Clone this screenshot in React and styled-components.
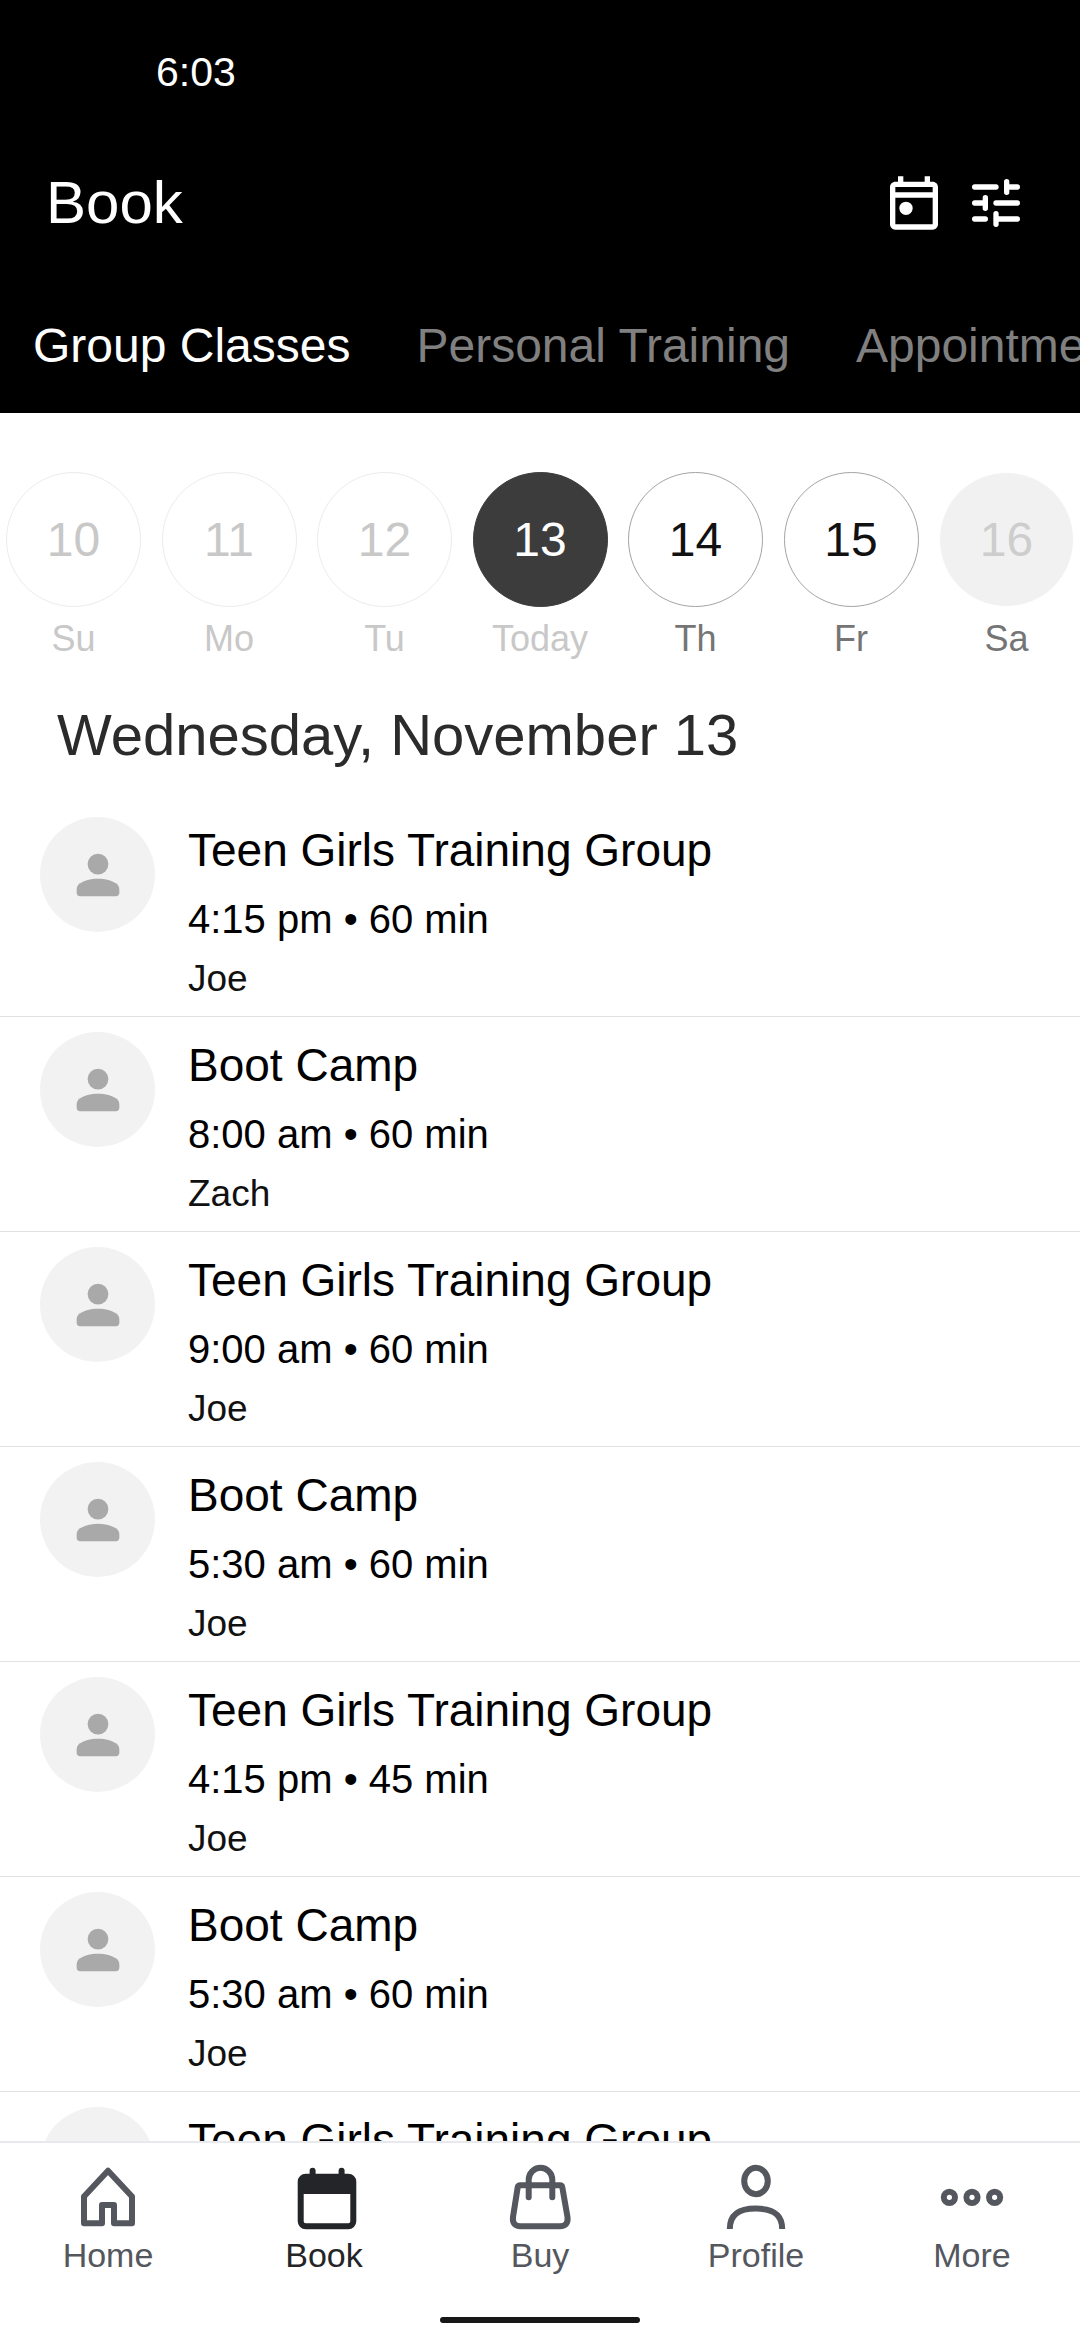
import React, { useState } from "react";
import styled, { createGlobalStyle } from "styled-components";

const tabs = ["Group Classes", "Personal Training", "Appointments"];

const days = [
  { date: 10, label: "Su", status: "past" },
  { date: 11, label: "Mo", status: "past" },
  { date: 12, label: "Tu", status: "past" },
  { date: 13, label: "Today", status: "selected" },
  { date: 14, label: "Th", status: "open" },
  { date: 15, label: "Fr", status: "open" },
  { date: 16, label: "Sa", status: "closed" },
];

const classes = [
  { id: 1, name: "Teen Girls Training Group", time: "4:15 pm • 60 min", coach: "Joe" },
  { id: 2, name: "Boot Camp", time: "8:00 am • 60 min", coach: "Zach" },
  { id: 3, name: "Teen Girls Training Group", time: "9:00 am • 60 min", coach: "Joe" },
  { id: 4, name: "Boot Camp", time: "5:30 am • 60 min", coach: "Joe" },
  { id: 5, name: "Teen Girls Training Group", time: "4:15 pm • 45 min", coach: "Joe" },
  { id: 6, name: "Boot Camp", time: "5:30 am • 60 min", coach: "Joe" },
  { id: 7, name: "Teen Girls Training Group", time: "4:15 pm • 60 min", coach: "Joe" },
];

const TodayIcon = () => (
  <Icon viewBox="0 -1 24 24" aria-hidden="true">
    <path
      fill="currentColor"
      fillRule="evenodd"
      d="M19 3h-1V1h-2v2H8V1H6v2H5c-1.1 0-2 .9-2 2v14c0 1.1.9 2 2 2h14c1.1 0 2-.9 2-2V5c0-1.1-.9-2-2-2zM19 19H5V9h14zM19 7H5V5h14z"
    />
    <circle cx="9" cy="13" r="2.5" fill="currentColor" />
  </Icon>
);

const FilterIcon = () => (
  <Icon viewBox="0 0 24 24" aria-hidden="true">
    <path
      fill="none"
      stroke="currentColor"
      strokeWidth="2"
      strokeLinecap="round"
      d="M4 6h8M16 4v4M16 6h4M4 12h4M8 10v4M12 12h8M4 18h4M12 16v4M12 18h8"
    />
  </Icon>
);

const PersonIcon = () => (
  <Icon viewBox="0 0 24 24" fill="currentColor" aria-hidden="true">
    <circle cx="12" cy="7.9" r="3.9" />
    <path d="M12 13.4c-2.9 0-5.3.8-6.7 1.7C4.4 15.7 4 16.5 4 17.4V18.7C4 19.5 4.5 20 5.3 20H18.7C19.5 20 20 19.5 20 18.7V17.4C20 16.5 19.6 15.7 18.7 15.1C17.3 14.2 14.9 13.4 12 13.4z" />
  </Icon>
);

const HomeIcon = () => (
  <NavIcon viewBox="0 0 64 64" aria-hidden="true">
    <path d="M8 31.5L32 5.8L56 31.5V58.3H38V40H26V58.3H8Z" />
  </NavIcon>
);

const BookIcon = () => (
  <NavIcon viewBox="0 0 64 64" aria-hidden="true">
    <path d="M20.6 5.8V12M49.6 5.8V12" />
    <rect x="8.7" y="11.7" width="52.6" height="49.6" rx="5" />
    <path d="M10 12H60V29H10Z" fill="currentColor" stroke="none" />
  </NavIcon>
);

const BagIcon = () => (
  <NavIcon viewBox="0 0 64 64" aria-hidden="true">
    <path d="M20.7 32.2V14.6a11.8 11.8 0 0 1 23.6 0V32.2" />
    <path d="M12.5 20.2H52Q54 20.2 54.3 22.2L59.5 52Q60.5 61.2 52 61.2H12.5Q4 61.2 5 52L9.7 22.2Q10 20.2 12.5 20.2Z" />
  </NavIcon>
);

const ProfileIcon = () => (
  <NavIcon viewBox="0 0 64 64" aria-hidden="true">
    <ellipse cx="32" cy="16" rx="11.8" ry="13.2" />
    <path strokeLinecap="butt" d="M5.8 64C5.8 50 14 43.6 32 43.6S58.2 50 58.2 64" />
  </NavIcon>
);

const MoreIcon = () => (
  <NavIcon viewBox="0 0 64 64" aria-hidden="true">
    <circle cx="9.4" cy="32.3" r="5.6" />
    <circle cx="32" cy="32.3" r="5.6" />
    <circle cx="54.6" cy="32.3" r="5.6" />
  </NavIcon>
);

const navItems = [
  { label: "Home", icon: HomeIcon },
  { label: "Book", icon: BookIcon },
  { label: "Buy", icon: BagIcon },
  { label: "Profile", icon: ProfileIcon },
  { label: "More", icon: MoreIcon },
];

const App = () => {
  const [activeTab, setActiveTab] = useState("Group Classes");

  return (
    <>
      <GlobalStyle />
      <Screen>
        <Header>
          <StatusBar>6:03</StatusBar>
          <TitleBar>
            <Title>Book</Title>
            <Actions>
              <IconButton aria-label="Go to today">
                <TodayIcon />
              </IconButton>
              <IconButton aria-label="Filters">
                <FilterIcon />
              </IconButton>
            </Actions>
          </TitleBar>
          <Tabs role="tablist">
            {tabs.map((tab) => (
              <Tab
                key={tab}
                role="tab"
                aria-selected={tab === activeTab}
                $active={tab === activeTab}
                onClick={() => setActiveTab(tab)}
              >
                {tab}
              </Tab>
            ))}
          </Tabs>
        </Header>

        <Main>
          <Week>
            {days.map((day) => (
              <Day key={day.date}>
                <DayCircle $status={day.status}>{day.date}</DayCircle>
                <DayLabel $muted={day.status === "past" || day.status === "selected"}>
                  {day.label}
                </DayLabel>
              </Day>
            ))}
          </Week>
          <DateHeading>Wednesday, November 13</DateHeading>
          <ClassList>
            {classes.map((item) => (
              <ClassRow key={item.id}>
                <Avatar>
                  <PersonIcon />
                </Avatar>
                <div>
                  <ClassName>{item.name}</ClassName>
                  <ClassTime>{item.time}</ClassTime>
                  <Coach>{item.coach}</Coach>
                </div>
              </ClassRow>
            ))}
          </ClassList>
        </Main>

        <Footer>
          <Nav>
            {navItems.map(({ label, icon: ItemIcon }) => (
              <NavLink key={label} href={`#${label.toLowerCase()}`} $active={label === "Book"}>
                <ItemIcon />
                {label}
              </NavLink>
            ))}
          </Nav>
          <HomeIndicator />
        </Footer>
      </Screen>
    </>
  );
};

const GlobalStyle = createGlobalStyle`
  * {
    box-sizing: border-box;
  }
  body {
    margin: 0;
    background: #fff;
    font-family: "Liberation Sans", Arial, sans-serif;
  }
  button {
    padding: 0;
    border: none;
    background: transparent;
    font-family: inherit;
  }
  h1, h2, h3, p, ul {
    margin: 0;
    padding: 0;
    font-weight: 400;
  }
`;

const Screen = styled.div`
  display: flex;
  flex-direction: column;
  height: 100vh;
  overflow: hidden;
`;

const Header = styled.header`
  flex: none;
  background: #000;
  color: #fff;
`;

const StatusBar = styled.div`
  padding: 48px 156px 0;
  font-size: 41px;
  line-height: 48px;
`;

const TitleBar = styled.div`
  display: flex;
  align-items: center;
  justify-content: space-between;
  padding: 71px 52px 0 46px;
`;

const Title = styled.h1`
  font-size: 60px;
  line-height: 72px;
`;

const Actions = styled.div`
  display: flex;
  gap: 18px;
`;

const IconButton = styled.button`
  display: flex;
  color: #fff;
`;

const Icon = styled.svg`
  display: block;
  width: 64px;
  height: 64px;
`;

const Tabs = styled.div`
  display: flex;
  overflow: hidden;
  padding: 79px 0 39px;
`;

const Tab = styled.button`
  flex: none;
  padding: 0 33px;
  color: ${({ $active }) => ($active ? "#fff" : "#808080")};
  font-size: 48px;
  line-height: 56px;
  white-space: nowrap;
`;

const Main = styled.main`
  flex: 1;
  min-height: 0;
  overflow: hidden;
`;

const Week = styled.div`
  display: flex;
  justify-content: space-between;
  padding: 59px 6px 0;
`;

const Day = styled.div`
  display: flex;
  flex-direction: column;
  align-items: center;
  width: 135px;
`;

const circleColors = {
  past: { text: "#c8c8c8", border: "#ececec", fill: "#fff" },
  selected: { text: "#fff", border: "#3c3c3c", fill: "#3c3c3c" },
  open: { text: "#111", border: "#a4a4a4", fill: "#fff" },
  closed: { text: "#cdcdcd", border: "#fff", fill: "#f1f1f1" },
};

const DayCircle = styled.button`
  width: 135px;
  height: 135px;
  border: 1px solid ${({ $status }) => circleColors[$status].border};
  border-radius: 50%;
  background: ${({ $status }) => circleColors[$status].fill};
  color: ${({ $status }) => circleColors[$status].text};
  font-size: 48px;
`;

const DayLabel = styled.span`
  margin-top: 12px;
  color: ${({ $muted }) => ($muted ? "#c8c8c8" : "#757575")};
  font-size: 36px;
  line-height: 40px;
`;

const DateHeading = styled.h2`
  padding: 44px 57px 0;
  color: #2b2b2b;
  font-size: 58px;
  line-height: 64px;
`;

const ClassList = styled.ul`
  padding-top: 35px;
  list-style: none;
`;

const ClassRow = styled.li`
  display: flex;
  gap: 33px;
  padding: 15px 40px 13px;
  border-bottom: 1px solid #e2e2e2;
  color: #000;
`;

const Avatar = styled.div`
  display: flex;
  flex: none;
  align-items: center;
  justify-content: center;
  width: 115px;
  height: 115px;
  border-radius: 50%;
  background: #f2f2f2;
  color: #a9a9a9;
`;

const ClassName = styled.h3`
  font-size: 46px;
  line-height: 66px;
`;

const ClassTime = styled.p`
  font-size: 40px;
  line-height: 72px;
`;

const Coach = styled.p`
  color: #111;
  font-size: 37px;
  line-height: 48px;
`;

const Footer = styled.footer`
  flex: none;
  padding-bottom: 17px;
  border-top: 2px solid #e8e9ec;
  background: #fff;
`;

const Nav = styled.nav`
  display: grid;
  grid-template-columns: repeat(5, 1fr);
`;

const NavLink = styled.a`
  display: flex;
  flex-direction: column;
  align-items: center;
  gap: 6px;
  padding-top: 22px;
  color: ${({ $active }) => ($active ? "#242529" : "#54575e")};
  font-size: 34px;
  line-height: 40px;
  text-decoration: none;
`;

const NavIcon = styled.svg`
  width: 64px;
  height: 64px;
  overflow: visible;
  fill: none;
  stroke: currentColor;
  stroke-width: 6px;
  stroke-linecap: round;
  stroke-linejoin: round;
`;

const HomeIndicator = styled.div`
  width: 200px;
  height: 6px;
  margin: 42px auto 0;
  border-radius: 3px;
  background: #171717;
`;

export default App;
